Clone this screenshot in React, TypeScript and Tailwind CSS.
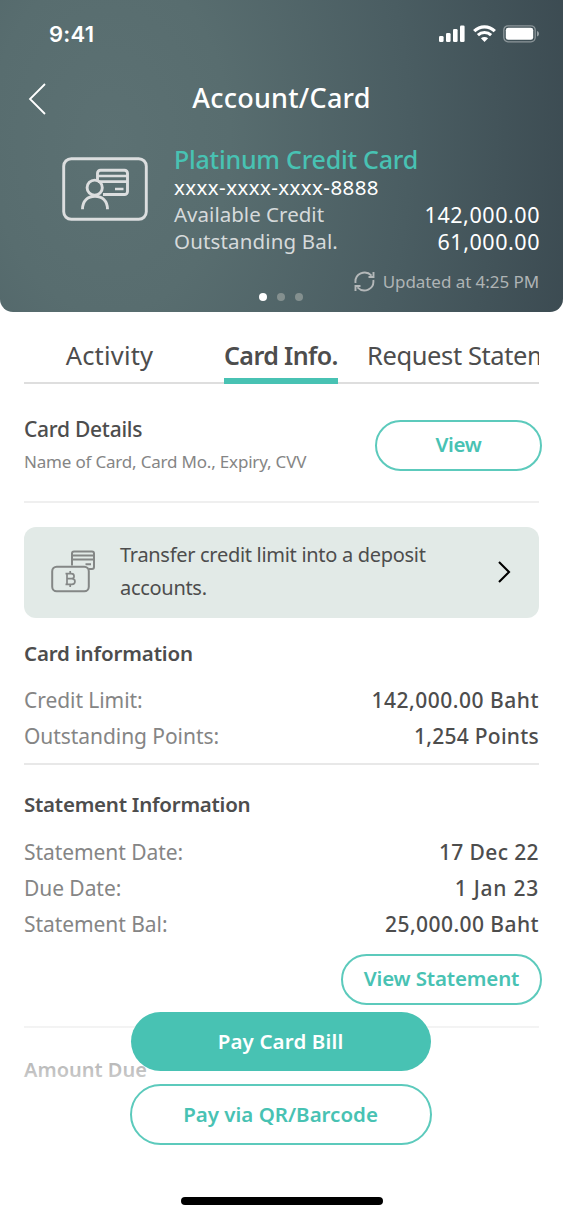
import React from "react";

function SignalIcon() {
  return (
    <svg width="27" height="18" viewBox="0 0 27 18" fill="#fff">
      <rect x="0" y="11" width="4.6" height="6" rx="1.3" />
      <rect x="7" y="8" width="4.6" height="9" rx="1.3" />
      <rect x="14" y="4" width="4.6" height="13" rx="1.3" />
      <rect x="21" y="0.5" width="4.6" height="16.5" rx="1.3" />
    </svg>
  );
}

function WifiIcon() {
  return (
    <svg width="23" height="18" viewBox="0 0 23 18" fill="none" stroke="#fff">
      <path d="M1.200 6.200C7 0.400 16 0.400 21.800 6.200" strokeWidth="3.200" />
      <path d="M4.900 10.100C8.600 6.500 14.400 6.500 18.100 10.100" strokeWidth="3" />
      <path d="M11.500 17 L7.900 13.300C10 11.500 13 11.500 15.100 13.300Z" fill="#fff" stroke="none" />
    </svg>
  );
}

function BatteryIcon() {
  return (
    <svg width="37" height="18" viewBox="0 0 37 18" fill="none">
      <rect x="0.8" y="0.8" width="31.4" height="16" rx="4.2" stroke="#fff" strokeOpacity="0.4" strokeWidth="1.3" />
      <rect x="2.8" y="2.8" width="27.4" height="12" rx="2.4" fill="#fff" />
      <path d="M34 6v5.6c1.3-.5 2-1.5 2-2.8s-.7-2.3-2-2.8Z" fill="#fff" fillOpacity="0.45" />
    </svg>
  );
}

function AccountCardIcon() {
  return (
    <svg width="86" height="64" viewBox="0 0 86 64" fill="none" stroke="#dcdedf" strokeWidth="2.9">
      <rect x="1.7" y="1.7" width="82.600" height="60.600" rx="7.500" />
      <path d="M35.500 23V16.200a3 3 0 0 1 3-3H62.500a3 3 0 0 1 3 3V34.500a3 3 0 0 1-3 3H41" />
      <path d="M36 19h29.500M36 24.700h29.500M53 32h8.500" strokeWidth="2.700" />
      <circle cx="32.700" cy="30.700" r="7.600" />
      <path d="M20.500 52.300C20.500 43.500 26 39.200 33 39.200S45.500 43.500 45.500 52.300" />
    </svg>
  );
}

function RefreshIcon() {
  return (
    <svg width="21" height="21" viewBox="0 0 21 21" fill="none" stroke="#b4b8b9" strokeWidth="1.9">
      <path d="M1.500 12C0.500 3 11 -2 17.600 4.600M19.300 9C20.500 18 10 23 3.400 16.400" />
      <path d="M19.500 1v5h-5M1.500 20v-5h5" />
    </svg>
  );
}

function TransferIcon() {
  return (
    <svg width="44" height="43" viewBox="0 0 44 43" fill="none" stroke="#848786" strokeWidth="2">
      <path d="M21 15.500V3.500a2 2 0 0 1 2-2h18a2 2 0 0 1 2 2v13.600a2 2 0 0 1-2 2h-3" />
      <path d="M21 5.500h22M21 9.500h22M34.500 14.300h5.500" />
      <rect x="1.200" y="16.700" width="36.600" height="24.600" rx="4.500" />
      <path d="M16 23.700h4.300c3.700 0 3.700 5 0 5h-4.300zM16 28.700h4.800c4.200 0 4.200 5.600 0 5.600H16zM16 23.700h-1.500M16 34.300h-1.500M19.200 21v2.700M19.200 34.300V37" strokeWidth="1.700" />
    </svg>
  );
}

type RowProps = { label: string; value: string; valueClass: string };

function InfoRow({ label, value, valueClass }: RowProps) {
  return (
    <div className="flex h-9 items-center justify-between text-[21px] leading-9">
      <span className="tracking-[-0.06px] text-[#858585]">{label}</span>
      <span className={`font-medium text-[#4d4d4d] ${valueClass}`}>{value}</span>
    </div>
  );
}

export default function App() {
  return (
    <div className="relative flex h-[1218px] w-[563px] flex-col overflow-hidden bg-white font-['Noto_Sans',sans-serif] whitespace-nowrap">
      <header className="flex h-[312px] shrink-0 flex-col rounded-b-[13px] bg-[radial-gradient(ellipse_500px_720px_at_110px_140px,#5c7173_0%,#586d6f_24%,#4a5d62_60%,#3b4a51_96%)] text-white">
        <div className="flex h-[68px] items-center justify-between pr-[23px] pl-[49px]">
          <span className="font-['Inter',sans-serif] text-[22px] font-semibold tracking-[0.2px]">9:41</span>
          <div className="flex items-center gap-[7px]">
            <SignalIcon />
            <WifiIcon />
            <BatteryIcon />
          </div>
        </div>

        <div className="grid h-[60px] grid-cols-[45px_1fr_45px] items-center">
          <svg className="mt-0.5 ml-7" width="18" height="32" viewBox="0 0 18 32" fill="none" stroke="#fff" strokeWidth="1.8">
            <path d="M17 1 L2 16 L17 31" />
          </svg>
          <h1 className="text-center text-[27px] font-medium tracking-[0.24px]">Account/Card</h1>
        </div>

        <div className="mt-4 flex pr-6 pl-[62px]">
          <div className="mt-[13px] mr-[26px] h-16 w-[86px] shrink-0">
            <AccountCardIcon />
          </div>
          <div className="flex-1 text-[20.5px] leading-[27px]">
            <div className="text-[25px] leading-[30px] font-medium tracking-[-0.23px] text-[#48c2b3]">Platinum Credit Card</div>
            <div className="tracking-[0.43px]">xxxx-xxxx-xxxx-8888</div>
            <div className="flex justify-between">
              <span className="tracking-[0.02px] text-[#d6dadb]">Available Credit</span>
              <span className="-mr-px text-[21.5px] tracking-[0.55px]">142,000.00</span>
            </div>
            <div className="flex justify-between">
              <span className="tracking-[0.15px] text-[#d6dadb]">Outstanding Bal.</span>
              <span className="-mr-px text-[21.5px] tracking-[0.55px]">61,000.00</span>
            </div>
          </div>
        </div>

        <div className="mt-[15px] flex h-[23px] items-center justify-end gap-2 pr-6 text-[17px] tracking-[-0.06px] text-[#afb4b5]">
          <RefreshIcon />
          <span>Updated at 4:25 PM</span>
        </div>
        <div className="flex justify-center gap-2.5 pr-px">
          <i className="size-2 rounded-full bg-white" />
          <i className="size-2 rounded-full bg-[#84908f]" />
          <i className="size-2 rounded-full bg-[#84908f]" />
        </div>
      </header>

      <main className="flex flex-col px-6 text-[#4d4d4d]">
        <nav className="flex h-[72px] items-end gap-[29px] overflow-hidden bg-[linear-gradient(to_top,#dedede_2px,transparent_2px)] text-[25.5px] leading-[45px]">
          <div className="w-[171px] shrink-0 border-b-[6px] border-transparent text-center tracking-[0.2px]">Activity</div>
          <div className="w-[114px] shrink-0 border-b-[6px] border-[#48c2b3] text-[25px] font-semibold tracking-[-0.6px]">Card Info.</div>
          <div className="shrink-0 border-b-[6px] border-transparent tracking-[-0.4px]">Request Statement</div>
        </nav>

        <section className="flex h-[119px] items-start justify-between border-b-2 border-[#efefef] pt-9">
          <div className="-mt-px">
            <h2 className="text-[21px] leading-[20px] font-medium tracking-[-0.26px]">Card Details</h2>
            <p className="mt-4 text-[17px] leading-[14px] tracking-[-0.19px] text-[#858585]">Name of Card, Card Mo., Expiry, CVV</p>
          </div>
          <button className="-mr-[3px] h-[51px] w-[167px] rounded-full border-2 border-[#5ccabc] pb-0.5 text-[20.5px] leading-none font-semibold tracking-[-0.3px] text-[#48c2b3]">View</button>
        </section>

        <section className="mt-6 flex h-[91px] items-center rounded-xl bg-[#e2eae7] pr-7 pb-0.5 pl-[27px]">
          <TransferIcon />
          <p className="mb-0.5 ml-[25px] flex-1 text-[20px] leading-[33px] tracking-[-0.3px]">
            Transfer credit limit into a deposit
            <br />
            accounts.
          </p>
          <svg width="14" height="24" viewBox="0 0 14 24" fill="none" stroke="#000" strokeWidth="2.1">
            <path d="M2 2 L12 12 L2 22" />
          </svg>
        </section>

        <section className="mt-[22px] h-[125px] border-b-2 border-[#e8e8e8]">
          <h2 className="mb-4 text-[20.5px] leading-[26px] font-semibold tracking-[-0.15px]">Card information</h2>
          <InfoRow label="Credit Limit:" value="142,000.00 Baht" valueClass="tracking-[0.5px]" />
          <InfoRow label="Outstanding Points:" value="1,254 Points" valueClass="tracking-[0.25px]" />
        </section>

        <section className="mt-[26px] h-[237px] border-b-2 border-[#ebebeb]">
          <h2 className="mb-4 text-[20.5px] leading-[27px] font-semibold tracking-[-0.25px]">Statement Information</h2>
          <InfoRow label="Statement Date:" value="17 Dec 22" valueClass="tracking-[0.38px]" />
          <InfoRow label="Due Date:" value="1 Jan 23" valueClass="tracking-[0.75px]" />
          <InfoRow label="Statement Bal:" value="25,000.00 Baht" valueClass="tracking-[0.43px]" />
          <button className="mt-3 -mr-[3px] ml-auto block h-[51px] w-[201px] rounded-full border-2 border-[#5ccabc] pb-0.5 text-[20.5px] leading-none font-semibold tracking-[-0.15px] text-[#48c2b3]">View Statement</button>
        </section>

        <h2 className="mt-7 text-[20px] leading-[28px] font-semibold">Amount Due</h2>
      </main>

      <footer className="absolute inset-x-0 bottom-0 flex h-[206px] flex-col items-center bg-[linear-gradient(to_bottom,rgba(255,255,255,0.35)_0px,rgba(255,255,255,0.64)_57px,#fff_104px)] pr-0.5">
        <button className="h-[59px] w-[300px] rounded-full bg-[#48c2b3] text-[20.5px] leading-none font-semibold tracking-[0.15px] text-white">Pay Card Bill</button>
        <button className="mt-[13px] h-[61px] w-[302px] rounded-full border-2 border-[#5ccabc] bg-white text-[20.5px] leading-none font-semibold text-[#48c2b3]">Pay via QR/Barcode</button>
        <div className="mt-[52px] ml-[3px] h-2 w-[202px] rounded-full bg-black" />
      </footer>
    </div>
  );
}
